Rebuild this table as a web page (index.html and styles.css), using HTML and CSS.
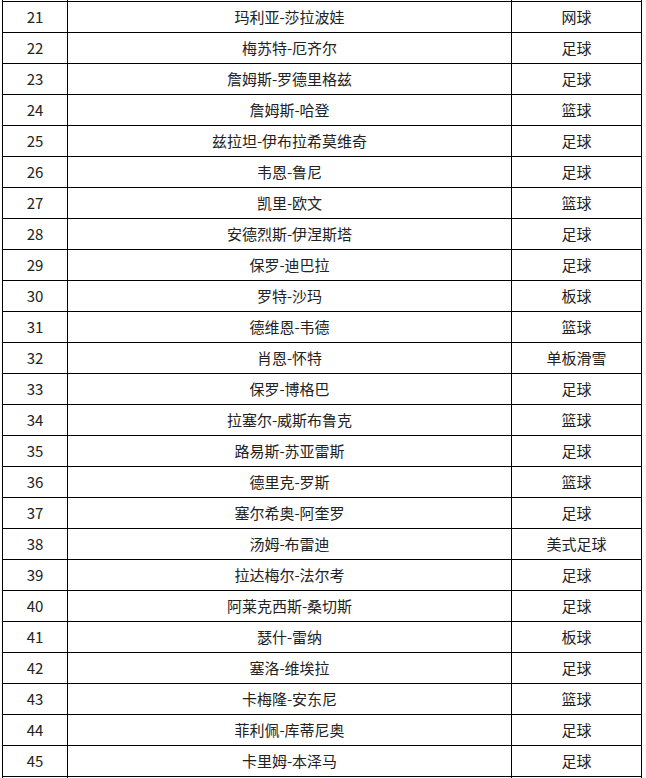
FILE: index.html
```html
<!DOCTYPE html>
<html lang="zh">
<head>
<meta charset="utf-8">
<link rel="stylesheet" href="styles.css">
</head>
<body>
<table class="roster">
<colgroup><col class="c-no"><col class="c-name"><col class="c-sport"></colgroup>
<tbody>
<tr class="cut"><td></td><td></td><td></td></tr>
<tr><td>21</td><td>玛利亚-莎拉波娃</td><td>网球</td></tr>
<tr><td>22</td><td>梅苏特-厄齐尔</td><td>足球</td></tr>
<tr><td>23</td><td>詹姆斯-罗德里格兹</td><td>足球</td></tr>
<tr><td>24</td><td>詹姆斯-哈登</td><td>篮球</td></tr>
<tr><td>25</td><td>兹拉坦-伊布拉希莫维奇</td><td>足球</td></tr>
<tr><td>26</td><td>韦恩-鲁尼</td><td>足球</td></tr>
<tr><td>27</td><td>凯里-欧文</td><td>篮球</td></tr>
<tr><td>28</td><td>安德烈斯-伊涅斯塔</td><td>足球</td></tr>
<tr><td>29</td><td>保罗-迪巴拉</td><td>足球</td></tr>
<tr><td>30</td><td>罗特-沙玛</td><td>板球</td></tr>
<tr><td>31</td><td>德维恩-韦德</td><td>篮球</td></tr>
<tr><td>32</td><td>肖恩-怀特</td><td>单板滑雪</td></tr>
<tr><td>33</td><td>保罗-博格巴</td><td>足球</td></tr>
<tr><td>34</td><td>拉塞尔-威斯布鲁克</td><td>篮球</td></tr>
<tr><td>35</td><td>路易斯-苏亚雷斯</td><td>足球</td></tr>
<tr><td>36</td><td>德里克-罗斯</td><td>篮球</td></tr>
<tr><td>37</td><td>塞尔希奥-阿奎罗</td><td>足球</td></tr>
<tr><td>38</td><td>汤姆-布雷迪</td><td>美式足球</td></tr>
<tr><td>39</td><td>拉达梅尔-法尔考</td><td>足球</td></tr>
<tr><td>40</td><td>阿莱克西斯-桑切斯</td><td>足球</td></tr>
<tr><td>41</td><td>瑟什-雷纳</td><td>板球</td></tr>
<tr><td>42</td><td>塞洛-维埃拉</td><td>足球</td></tr>
<tr><td>43</td><td>卡梅隆-安东尼</td><td>篮球</td></tr>
<tr><td>44</td><td>菲利佩-库蒂尼奥</td><td>足球</td></tr>
<tr><td>45</td><td>卡里姆-本泽马</td><td>足球</td></tr>
<tr class="cut"><td></td><td></td><td></td></tr>
</tbody>
</table>
</body>
</html>
```
FILE: styles.css
```css
html, body {
  margin: 0;
  padding: 0;
  background: #ffffff;
  overflow: hidden;
}
body {
  font-family: "Noto Sans CJK SC", "Noto Sans", sans-serif;
  font-size: 15px;
  color: #222222;
}
.roster {
  border-collapse: collapse;
  table-layout: fixed;
  width: 639px;
  margin: -30px 0 0 2px;
}
.c-no { width: 65px; }
.c-name { width: 444px; }
.c-sport { width: 130px; }
.roster td {
  border: 1px solid #000000;
  height: 30px;
  padding: 0;
  text-align: center;
  vertical-align: middle;
  line-height: 30px;
  white-space: nowrap;
}
```
